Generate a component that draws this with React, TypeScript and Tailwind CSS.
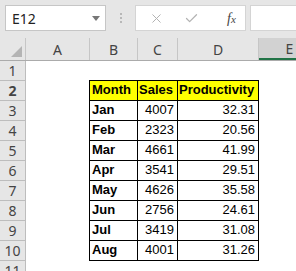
import { X, Check } from 'lucide-react'

const cols = ['A', 'B', 'C', 'D', 'E']

const data = [
  { month: 'Jan', sales: 4007, prod: '32.31' },
  { month: 'Feb', sales: 2323, prod: '20.56' },
  { month: 'Mar', sales: 4661, prod: '41.99' },
  { month: 'Apr', sales: 3541, prod: '29.51' },
  { month: 'May', sales: 4626, prod: '35.58' },
  { month: 'Jun', sales: 2756, prod: '24.61' },
  { month: 'Jul', sales: 3419, prod: '31.08' },
  { month: 'Aug', sales: 4001, prod: '31.26' },
]

function RowHead({ n }: { n: number }) {
  return (
    <div className="w-[26px] shrink-0 h-full bg-[#e6e6e6] border-r border-b border-[#bdbdbd] flex items-center justify-center text-[14px] text-[#444] font-['Noto_Sans']">
      {n}
    </div>
  )
}

export default function App() {
  return (
    <div className="w-[296px] h-[271px] overflow-hidden bg-white font-['Liberation_Sans',sans-serif] text-black">
      {/* Formula bar */}
      <div className="h-[38px] bg-[#e6e6e6] flex items-start pt-[5px] pl-[5px]">
        <div className="w-[101px] h-[26px] bg-white border border-[#c6c6c6] flex items-center justify-between pl-[6px] pr-[5px]">
          <span className="text-[14px] text-[#222] font-['Noto_Sans']">E12</span>
          <svg width="8" height="5" viewBox="0 0 8 5">
            <path d="M0 0 L8 0 L4 5 Z" fill="#777" />
          </svg>
        </div>
        <div className="w-[29px] h-[26px] flex flex-col items-center justify-center gap-[2px]">
          <div className="w-[2px] h-[2px] bg-[#b8b8b8]" />
          <div className="w-[2px] h-[2px] bg-[#b8b8b8]" />
          <div className="w-[2px] h-[2px] bg-[#b8b8b8]" />
        </div>
        <div className="w-[111px] h-[26px] bg-white border border-[#d4d4d4] flex items-center">
          <div className="w-[38px] flex justify-center pl-[2px]">
            <X size={15} strokeWidth={1.6} color="#b3b3b3" />
          </div>
          <div className="w-[34px] flex justify-center">
            <Check size={15} strokeWidth={2} color="#b3b3b3" />
          </div>
          <div className="flex-1 flex justify-center pl-[10px]">
            <span className="font-['Liberation_Serif'] italic text-[14px] text-[#444]">
              f<span className="text-[11px]">x</span>
            </span>
          </div>
        </div>
        <div className="flex-1 ml-[4px] h-[26px] bg-white border border-[#d4d4d4] border-r-0" />
      </div>

      {/* Column headers */}
      <div className="flex h-[23px] bg-[#e6e6e6] border-b border-[#ababab] text-[14px] text-[#444] font-['Noto_Sans']">
        <div className="w-[26px] shrink-0 relative border-r border-[#c6c6c6]">
          <svg className="absolute right-[3px] bottom-[3px]" width="11" height="11" viewBox="0 0 11 11">
            <path d="M11 0 L11 11 L0 11 Z" fill="#b4b4b4" />
          </svg>
        </div>
        <div className="w-[64px] shrink-0 border-r border-[#c6c6c6] flex items-center justify-center">{cols[0]}</div>
        <div className="w-[48px] shrink-0 border-r border-[#c6c6c6] flex items-center justify-center">{cols[1]}</div>
        <div className="w-[40px] shrink-0 border-r border-[#c6c6c6] flex items-center justify-center">{cols[2]}</div>
        <div className="w-[81px] shrink-0 border-r border-[#c6c6c6] flex items-center justify-center">{cols[3]}</div>
        <div className="flex-1 bg-[#d2d2d2] border-b-2 border-[#217346] flex items-center justify-center pl-[24px]">{cols[4]}</div>
      </div>

      {/* Row 1 */}
      <div className="flex h-[20px]">
        <RowHead n={1} />
        <div className="w-[63px] shrink-0" />
        <div className="w-[49px] shrink-0 border-b border-black" />
        <div className="w-[40px] shrink-0 border-b border-black" />
        <div className="w-[81px] shrink-0 border-b border-black" />
      </div>

      {/* Row 2 header */}
      <div className="flex h-[20px] text-[13px] font-bold">
        <RowHead n={2} />
        <div className="w-[63px] shrink-0" />
        <div className="w-[49px] shrink-0 bg-[#ffff00] border-l border-r border-b border-black flex items-end pl-[2px] pb-[1px]">Month</div>
        <div className="w-[40px] shrink-0 bg-[#ffff00] border-r border-b border-black flex items-end pl-[1px] pb-[1px]">Sales</div>
        <div className="w-[81px] shrink-0 bg-[#ffff00] border-r border-b border-black flex items-end pl-[1px] pb-[1px]">Productivity</div>
      </div>

      {data.map((row, i) => (
        <div key={row.month} className="flex h-[20px] text-[13px]">
          <RowHead n={i + 3} />
          <div className="w-[63px] shrink-0" />
          <div className="w-[49px] shrink-0 border-l border-r border-b border-black flex items-end pl-[2px] pb-[1px] font-bold">{row.month}</div>
          <div className="w-[40px] shrink-0 border-r border-b border-black flex items-end justify-end pr-[3px] pb-[1px]">{row.sales}</div>
          <div className="w-[81px] shrink-0 border-r border-b border-black flex items-end justify-end pr-[3px] pb-[1px]">{row.prod}</div>
        </div>
      ))}

      <div className="flex h-[20px]">
        <RowHead n={11} />
      </div>
    </div>
  )
}
